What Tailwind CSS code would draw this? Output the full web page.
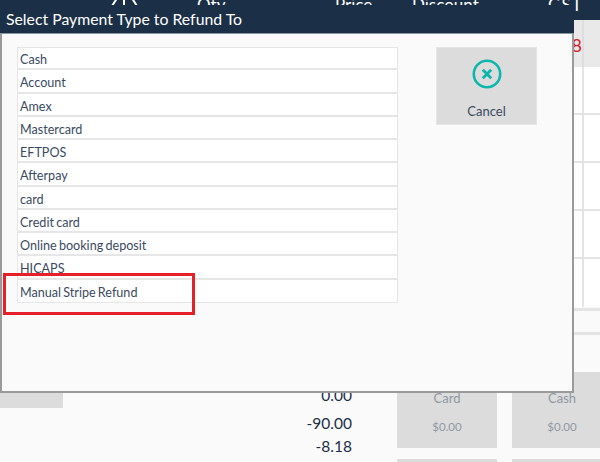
<!DOCTYPE html>
<html>
<head>
<meta charset="utf-8">
<script src="https://cdn.jsdelivr.net/npm/@tailwindcss/browser@4"></script>
</head>
<body class="m-0">
<div class="relative w-[600px] h-[462px] overflow-hidden bg-[#fafafa] font-['Lato','Noto_Sans',sans-serif]">
  <!-- page behind -->
  <header class="h-5 bg-[#1b2f47] text-white text-[17px] leading-5 relative overflow-hidden">
    <div class="flex items-start -mt-[5px] pl-[110px]">
      <svg class="w-[30px] h-5 mt-[-6px] shrink-0" viewBox="0 0 30 20" fill="none" stroke="#fff" stroke-width="2"><path d="M2 17 L11 3 M14 3 L14 17 M18 3 L27 17"/></svg>
      <span class="ml-[57px] w-[40px]">Qty</span>
      <span class="ml-[98px] w-[37px]">Price</span>
      <span class="ml-[40px] w-[64px]">Discount</span>
      <span class="ml-[72px] tracking-[1px]">GST</span>
    </div>
  </header>
  <div class="grid grid-cols-[584px_1fr] bg-white text-[#d9202a] text-[18px]">
    <div class="h-[47px] bg-[#e9e9e9] border-r-2 border-[#dedede] flex items-center justify-end pt-[4px]">8</div>
    <div class="h-[47px] bg-[#e9e9e9]"></div>
    <div class="h-[48px] border-r-2 border-b-2 border-[#e4e4e4]"></div><div class="h-[48px] border-b-2 border-[#e4e4e4]"></div>
    <div class="h-[48px] border-r-2 border-b-2 border-[#e4e4e4]"></div><div class="h-[48px] border-b-2 border-[#e4e4e4]"></div>
    <div class="h-[48px] border-r-2 border-b-2 border-[#e4e4e4]"></div><div class="h-[48px] border-b-2 border-[#e4e4e4]"></div>
    <div class="h-[48px] border-r-2 border-b-2 border-[#e4e4e4]"></div><div class="h-[48px] border-b-2 border-[#e4e4e4]"></div>
    <div class="h-[48px] border-r-2 border-[#e4e4e4]"></div><div class="h-[48px]"></div>
  </div>
  <div class="h-[27px] border-y-[3px] border-[#e4e4e4] bg-[#fafafa] mt-[1px]"></div>
  <div class="flex mt-[37px] items-start">
    <div class="w-[63px] h-[36px] bg-[#dcdcdc] shrink-0"></div>
    <div class="w-[289px] shrink-0 text-right text-[15.5px] leading-[23px] text-[#1b2f47] pt-[12px]">
      <div>0.00</div>
      <div class="mt-[5px]">-90.00</div>
      <div>-8.18</div>
    </div>
    <div class="ml-[45px] grid grid-cols-[100px_100px] gap-x-[15px] gap-y-[11px] shrink-0 text-center text-[#8f98a3]">
      <div class="h-[76px] bg-[#dcdcdc] pt-[18px]"><div class="text-[13px] leading-4">Card</div><div class="text-[11.5px] leading-4 mt-[13px]">$0.00</div></div>
      <div class="h-[76px] bg-[#dcdcdc] pt-[18px]"><div class="text-[13px] leading-4">Cash</div><div class="text-[11.5px] leading-4 mt-[13px]">$0.00</div></div>
      <div class="h-[76px] bg-[#dcdcdc]"></div>
      <div class="h-[76px] bg-[#dcdcdc]"></div>
    </div>
  </div>

  <!-- dialog over the page -->
  <section class="absolute left-0 top-[5px] w-[574px] h-[388px] bg-[#fafafa] border-2 border-t-0 border-[#9a9a9a] flex flex-col">
    <h1 class="-mx-[2px] bg-[#1b2f47] text-white text-[15.8px] font-normal leading-[28px] pl-[6px] border-b border-[#8a94a0] box-content h-[28px]">Select Payment Type to Refund To</h1>
    <div class="flex items-start pt-[13px] pl-[15px]">
      <ul class="w-[381px] flex flex-col text-[12.6px] [word-spacing:-1px] text-[#3a4a5f]">
        <li class="h-[23.27px] leading-[23px] pl-[2px] bg-white border border-b-2 border-[#e6e6e6]">Cash</li>
        <li class="h-[23.27px] leading-[25px] pl-[2px] bg-white border-x border-b-2 border-[#e6e6e6]">Account</li>
        <li class="h-[23.27px] leading-[25px] pl-[2px] bg-white border-x border-b-2 border-[#e6e6e6]">Amex</li>
        <li class="h-[23.27px] leading-[25px] pl-[2px] bg-white border-x border-b-2 border-[#e6e6e6]">Mastercard</li>
        <li class="h-[23.27px] leading-[25px] pl-[2px] bg-white border-x border-b-2 border-[#e6e6e6]">EFTPOS</li>
        <li class="h-[23.27px] leading-[25px] pl-[2px] bg-white border-x border-b-2 border-[#e6e6e6]">Afterpay</li>
        <li class="h-[23.27px] leading-[25px] pl-[2px] bg-white border-x border-b-2 border-[#e6e6e6]">card</li>
        <li class="h-[23.27px] leading-[25px] pl-[2px] bg-white border-x border-b-2 border-[#e6e6e6]">Credit card</li>
        <li class="h-[23.27px] leading-[25px] pl-[2px] bg-white border-x border-b-2 border-[#e6e6e6]">Online booking deposit</li>
        <li class="h-[23.27px] leading-[25px] pl-[2px] bg-white border-x border-b-2 border-[#e6e6e6]">HICAPS</li>
        <li class="h-[23.27px] leading-[25px] pl-[2px] bg-white border-x border-b border-[#e6e6e6]">Manual Stripe Refund</li>
      </ul>
      <button class="ml-[38px] w-[101px] h-[78px] bg-[#dcdcdc] border border-[#e6e6e6] flex flex-col items-center text-[13px] text-[#3a4a5f]">
        <svg class="mt-[11px] w-[30px] h-[30px]" viewBox="0 0 30 30" fill="none" stroke="#0cb6ad"><circle cx="15" cy="15" r="13.2" stroke-width="2.6"/><path d="M10.8 10.8 L19.2 19.2 M19.2 10.8 L10.8 19.2" stroke-width="2.8"/></svg>
        <span class="mt-[14px] leading-4">Cancel</span>
      </button>
    </div>
  </section>

  <!-- annotation -->
  <div class="absolute left-[3px] top-[273px] w-[192px] h-[42px] border-[3px] border-[#e5202a]"></div>
</div>
</body>
</html>
